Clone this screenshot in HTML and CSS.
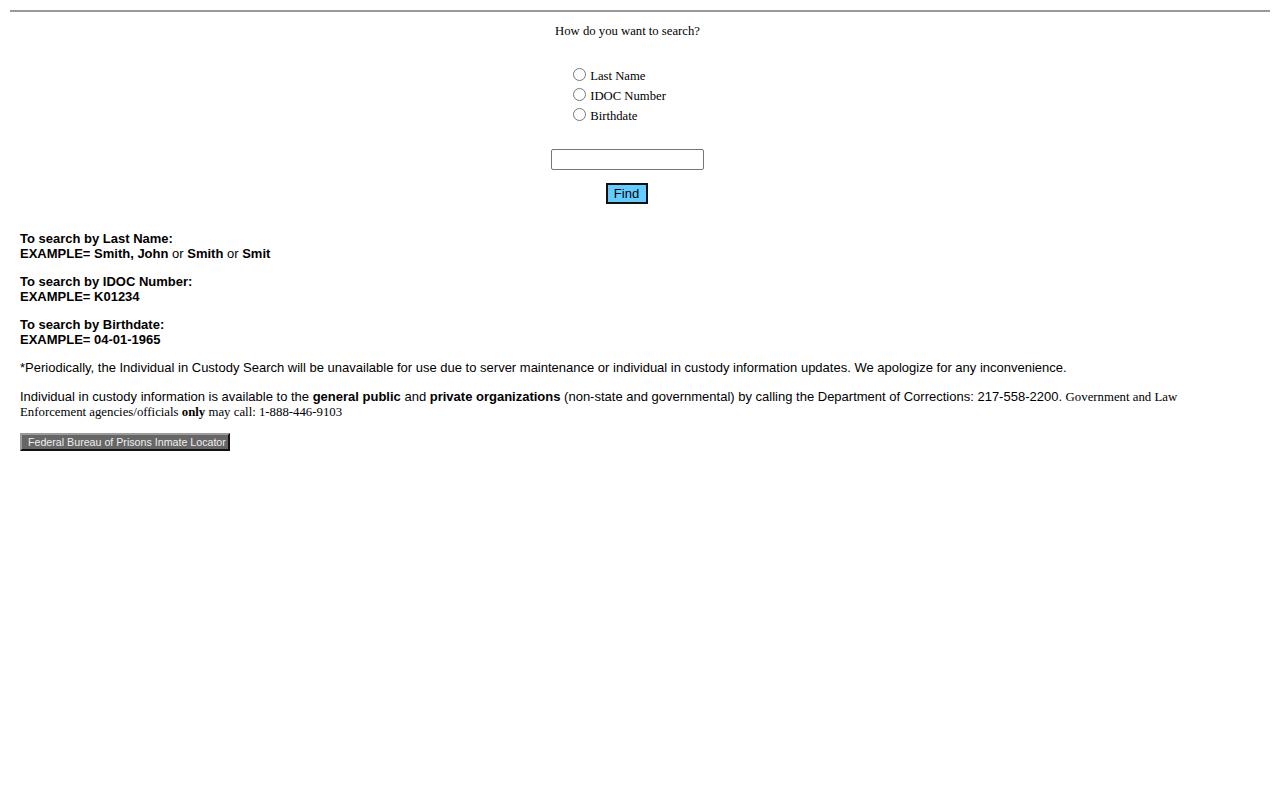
FILE: index.html
```html
<!DOCTYPE html>
<html>
<head>
<meta charset="utf-8">
<title>Individual in Custody Search</title>
<link rel="stylesheet" href="styles.css">
</head>
<body>
<div class="page">
  <hr class="rule">
  <form class="search">
    <p class="question">How do you want to search?</p>
    <div class="options">
      <label class="opt"><input type="radio" name="t" class="radio"> Last Name</label>
      <label class="opt"><input type="radio" name="t" class="radio"> IDOC Number</label>
      <label class="opt"><input type="radio" name="t" class="radio"> Birthdate</label>
    </div>
    <div class="field"><input type="text" class="textbox"></div>
    <div class="submit"><button type="button" class="find">Find</button></div>
  </form>
  <div class="help">
    <p class="tip"><b>To search by Last Name:<br>EXAMPLE= Smith, John</b> or <b>Smith</b> or <b>Smit</b></p>
    <p class="tip"><b>To search by IDOC Number:<br>EXAMPLE= K01234</b></p>
    <p class="tip"><b>To search by Birthdate:<br>EXAMPLE= 04-01-1965</b></p>
    <p class="tip tip-notice">*Periodically, the Individual in Custody Search will be unavailable for use due to server maintenance or individual in custody information updates. We apologize for any inconvenience.</p>
    <p class="tip tip-contact">Individual in custody information is available to the <b>general public</b> and <b>private organizations</b> (non-state and governmental) by calling the Department of Corrections: 217-558-2200. <span class="serif">Government and Law Enforcement agencies/officials <b>only</b> may call: 1-888-446-9103</span></p>
    <button type="button" class="federal">Federal Bureau of Prisons Inmate Locator</button>
  </div>
</div>
</body>
</html>
```

FILE: styles.css
```css
html, body {
  margin: 0;
  padding: 0;
  background: #ffffff;
}
.page {
  padding: 10px 10px;
  color: #000;
}
.rule {
  margin: 0;
  height: 0;
  border: 0;
  border-top: 2px solid #999999;
}
.search {
  margin: 0;
  padding: 0 35px 0 10px;
  text-align: center;
  font-family: "Liberation Serif", "Times New Roman", serif;
  font-size: 12.7px;
}
.question {
  margin: 12px 0 0 0;
  line-height: 15px;
}
.options {
  width: 119px;
  margin: 27px auto 0 auto;
  text-align: left;
}
.opt {
  display: block;
  height: 20px;
  line-height: 20px;
}
.radio {
  width: 13px;
  height: 13px;
  margin: 0 1px 0 5px;
  vertical-align: -1px;
}
.field {
  margin-top: 23px;
  line-height: 0;
}
.textbox {
  box-sizing: border-box;
  width: 153px;
  height: 21px;
  margin: 0;
  border: 1px solid #767676;
  border-radius: 2px;
  padding: 1px 2px;
  font-family: "Liberation Sans", Arial, sans-serif;
  font-size: 13px;
}
.submit {
  margin-top: 13px;
  line-height: 0;
}
.find {
  box-sizing: border-box;
  width: 42px;
  height: 21px;
  margin: 0 2px 0 0;
  padding: 0;
  background: #66ccff;
  border: 2px solid #111111;
  color: #000;
  font-family: "Liberation Sans", Arial, sans-serif;
  font-size: 13px;
  line-height: 15px;
}
.help {
  padding: 27px 35px 0 10px;
  font-family: "Liberation Sans", Arial, sans-serif;
  font-size: 13px;
  line-height: 15px;
}
.tip {
  margin: 0 0 13px 0;
}
.tip-notice {
  margin-bottom: 14px;
}
.tip-contact {
  margin-bottom: 14px;
}
.serif {
  font-family: "Liberation Serif", "Times New Roman", serif;
  font-size: 12.8px;
  line-height: 1;
}
.federal {
  box-sizing: border-box;
  width: 210px;
  height: 18px;
  margin: 0;
  padding: 0 2px 0 6px;
  background: #666666;
  color: #eeeeee;
  border: 2px solid;
  border-color: #9a9a9a #111111 #111111 #9a9a9a;
  font-family: "Liberation Sans", Arial, sans-serif;
  font-size: 10.67px;
  line-height: 14px;
  text-align: left;
  white-space: nowrap;
}
```
